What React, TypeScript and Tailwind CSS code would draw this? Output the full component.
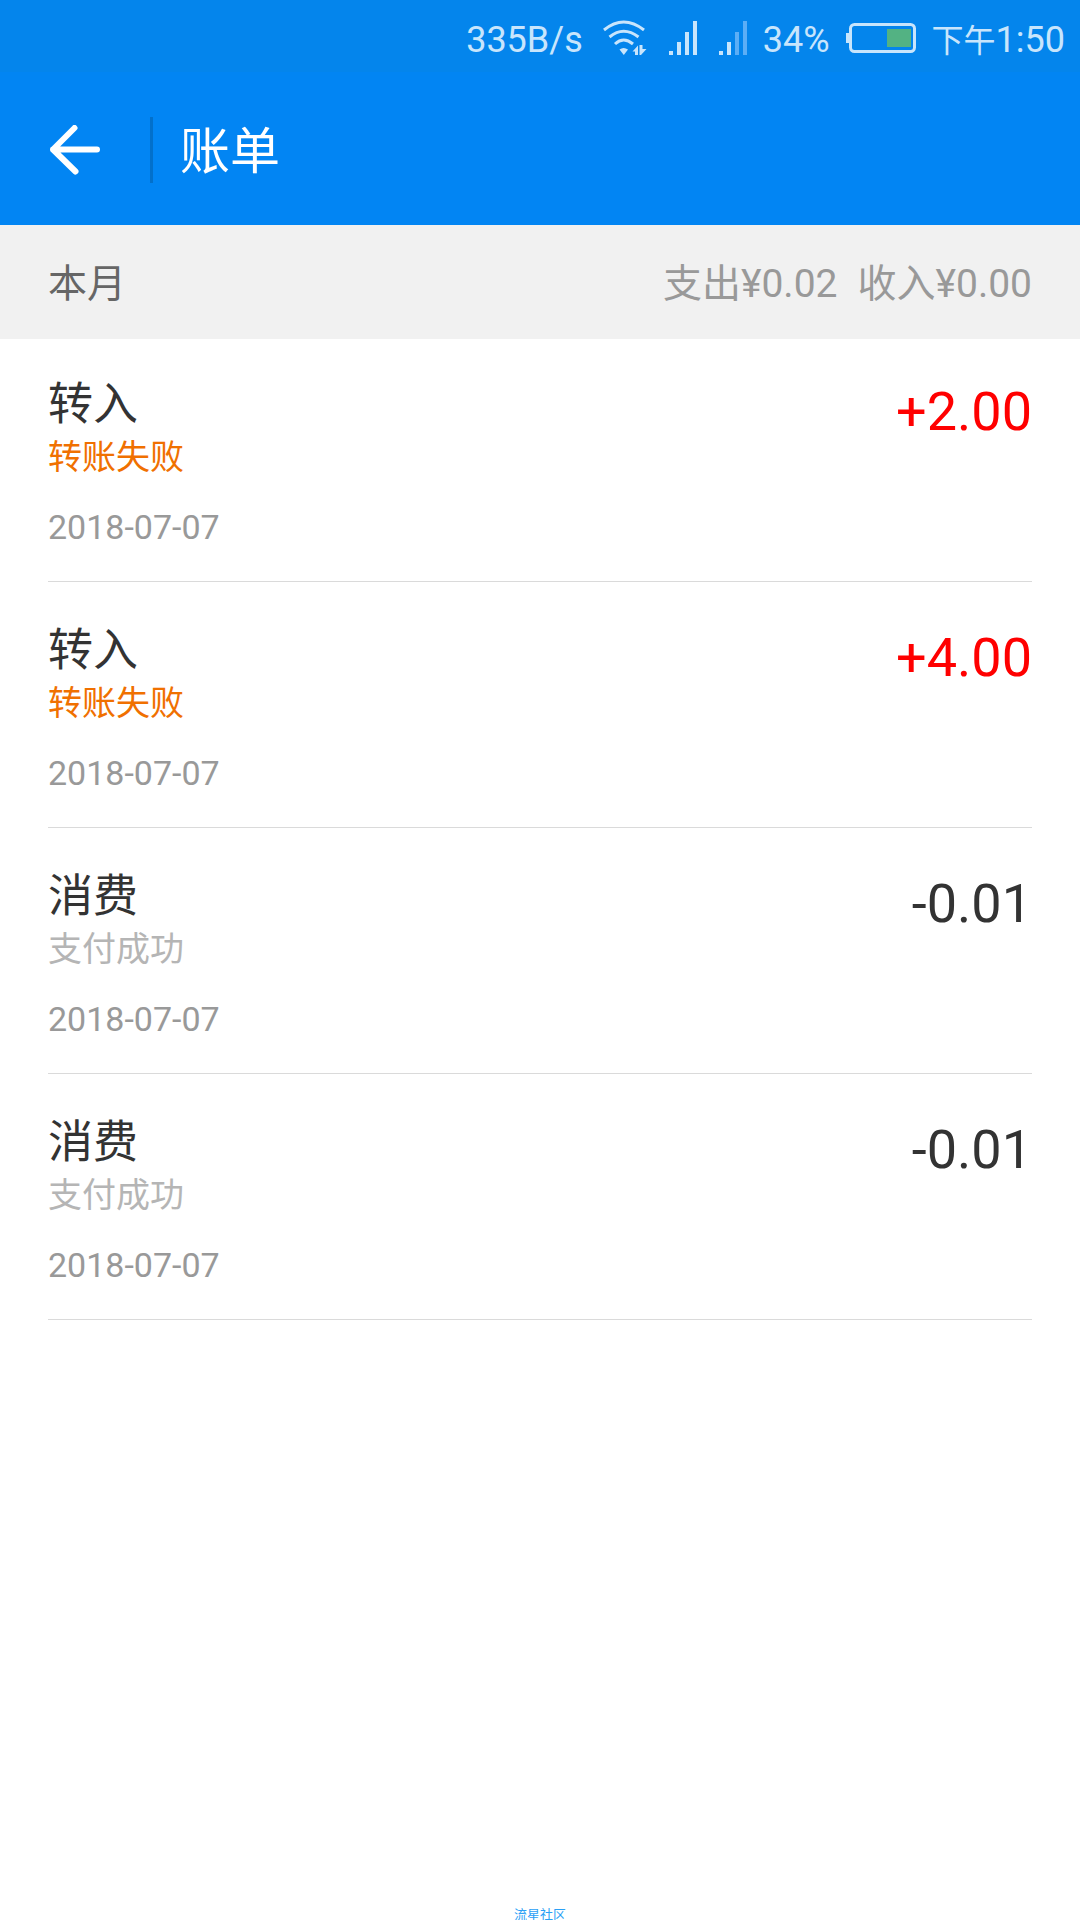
type Bill = {
  id: number;
  title: string;
  status: string;
  failed: boolean;
  amount: string;
  date: string;
};

const bills: Bill[] = [
  { id: 1, title: "转入", status: "转账失败", failed: true, amount: "+2.00", date: "2018-07-07" },
  { id: 2, title: "转入", status: "转账失败", failed: true, amount: "+4.00", date: "2018-07-07" },
  { id: 3, title: "消费", status: "支付成功", failed: false, amount: "-0.01", date: "2018-07-07" },
  { id: 4, title: "消费", status: "支付成功", failed: false, amount: "-0.01", date: "2018-07-07" },
];

function WifiIcon() {
  return (
    <svg width="44" height="36" viewBox="0 0 44 36" fill="none" aria-hidden="true">
      <g stroke="#c8e5fc" strokeWidth="3">
        <path d="M1 10Q20.500 -6 41 10" />
        <path d="M6.500 17Q20.500 5.500 35.500 17" />
        <path d="M12 24Q20.500 16 30 24" />
      </g>
      <path d="M16.500 29.500Q20.500 26.500 25 29.500L20.800 35Z" fill="#c8e5fc" />
      <path d="M29.500 31.500L35 25.500V35H32V31.500ZM36.500 25H39.500V29H43.500L38 35H36.500Z" fill="#c8e5fc" />
    </svg>
  );
}

function SignalIcon({ weak = false }: { weak?: boolean }) {
  const dim = weak ? "#5caef6" : "#c8e5fc";
  return (
    <svg width="28" height="34" viewBox="0 0 28 34" aria-hidden="true">
      <rect x="0" y="30" width="4" height="4" fill="#c8e5fc" />
      <rect x="8" y="21" width="4" height="13" fill="#c8e5fc" />
      <rect x="16" y="11" width="4" height="23" fill={dim} />
      <rect x="24" y="0" width="4" height="34" fill={dim} />
    </svg>
  );
}

function BatteryIcon() {
  return (
    <svg width="70" height="30" viewBox="0 0 70 30" fill="none" aria-hidden="true">
      <rect x="0" y="10" width="4" height="10" fill="#c8e5fc" />
      <rect x="4.500" y="1.500" width="64" height="27" rx="4" stroke="#c8e5fc" strokeWidth="3" />
      <rect x="41" y="6" width="24" height="18" fill="#53b283" />
    </svg>
  );
}

function BackIcon() {
  return (
    <svg width="52" height="50" viewBox="0 0 52 50" fill="none" aria-hidden="true">
      <path
        d="M26.500 3L5 24.500L27.500 46.500M5 24.500H49"
        stroke="#fff"
        strokeWidth="6"
        strokeLinecap="round"
        strokeLinejoin="bevel"
      />
    </svg>
  );
}

function StatusBar() {
  return (
    <div className="flex h-[72px] items-center justify-end bg-[#0485ec] pt-1 pr-[15px] text-[36px] leading-[36px] text-[#c8e5fc]">
      <span className="pt-1">335B/s</span>
      <div className="ml-5 flex items-center gap-[22px]">
        <WifiIcon />
        <SignalIcon />
        <SignalIcon weak />
      </div>
      <span className="ml-4 pt-1">34%</span>
      <div className="mr-4 ml-4">
        <BatteryIcon />
      </div>
      <span className="pt-1">
        <span className="text-[32px]">下午</span>1:50
      </span>
    </div>
  );
}

function BillRow({ bill }: { bill: Bill }) {
  return (
    <li className="flex items-start justify-between border-b border-[#dadada] pt-10 pb-[30px] first:pt-[37px]">
      <div>
        <h2 className="text-[45px] leading-[57px] text-[#333]">{bill.title}</h2>
        <p
          className={
            bill.failed
              ? "text-[34px] leading-[48px] text-[#f07000]"
              : "text-[34px] leading-[48px] text-[#b5b5b5]"
          }
        >
          {bill.status}
        </p>
        <time dateTime={bill.date} className="mt-[22px] block text-[34px] leading-[48px] text-[#999]">
          {bill.date}
        </time>
      </div>
      <span
        className={
          bill.failed
            ? "text-[54px] leading-[72px] text-[#f00]"
            : "text-[54px] leading-[72px] text-[#333]"
        }
      >
        {bill.amount}
      </span>
    </li>
  );
}

export default function App() {
  return (
    <div className="flex min-h-screen flex-col bg-white font-[Roboto,'Noto_Sans_CJK_SC',sans-serif]">
      <StatusBar />
      <header className="flex h-[153px] items-center bg-[#0285f3] px-12 pt-0.5">
        <button type="button" aria-label="返回" className="mr-[50px]">
          <BackIcon />
        </button>
        <div className="h-[66px] w-[3px] bg-[#0270cb]" />
        <h1 className="ml-[27px] pt-1 text-[50px] leading-[66px] text-white">账单</h1>
      </header>

      <section className="flex h-[114px] items-center justify-between bg-[#f1f1f1] px-12 pt-1 text-[39px] leading-[54px]">
        <span className="text-[#666]">本月</span>
        <div className="flex gap-5 text-[#999]">
          <span>支出¥0.02</span>
          <span>收入¥0.00</span>
        </div>
      </section>

      <ul className="px-12">
        {bills.map((bill) => (
          <BillRow key={bill.id} bill={bill} />
        ))}
      </ul>

      <footer className="mt-auto text-center text-[13px] leading-[10px] text-[#2ba0f5]">流星社区</footer>
    </div>
  );
}
